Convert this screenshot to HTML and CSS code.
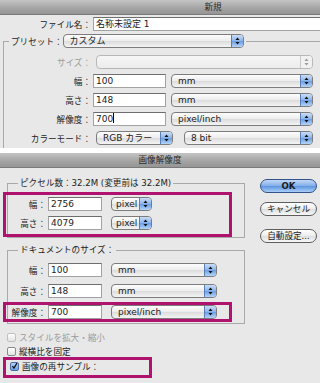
FILE: index.html
```html
<!DOCTYPE html>
<html lang="ja">
<head>
    <meta charset="utf-8" />
    <title>新規 / 画像解像度</title>
    <link rel="stylesheet" href="styles.css">
</head>
<body>
    <div class="win win-new">
        <div class="titlebar title-new">新規</div>
        <div class="file-row">
            <span class="lbl lbl-file">ファイル名：</span>
            <div class="field w-file">名称未設定 1</div>
        </div>
        <fieldset class="grp grp-new">
            <legend>
                <div class="legend-row">
                    <span class="lbl">プリセット：</span>
                    <div class="pop w-preset"><span class="txt">カスタム</span><span class="step"><svg width="9" height="12" viewBox="0 0 9 12"><path d="M2.5 5h4L4.5 2.5z M2.5 7h4L4.5 9.5z" fill="#111"/></svg></span></div>
                </div>
            </legend>
            <div class="frow">
                <span class="lbl lbl-new dim">サイズ：</span>
                <div class="pop dis w-size ml5"><span class="txt"></span><span class="step"><svg width="9" height="12" viewBox="0 0 9 12"><path d="M2.5 5h4L4.5 2.5z M2.5 7h4L4.5 9.5z" fill="#9a9a9a"/></svg></span></div>
            </div>
            <div class="frow">
                <span class="lbl lbl-new">幅：</span>
                <div class="field w-num-new">100</div>
                <div class="pop w-unit-new ml5"><span class="txt">mm</span><span class="step"><svg width="9" height="12" viewBox="0 0 9 12"><path d="M2.5 5h4L4.5 2.5z M2.5 7h4L4.5 9.5z" fill="#111"/></svg></span></div>
            </div>
            <div class="frow">
                <span class="lbl lbl-new">高さ：</span>
                <div class="field w-num-new">148</div>
                <div class="pop w-unit-new ml5"><span class="txt">mm</span><span class="step"><svg width="9" height="12" viewBox="0 0 9 12"><path d="M2.5 5h4L4.5 2.5z M2.5 7h4L4.5 9.5z" fill="#111"/></svg></span></div>
            </div>
            <div class="frow">
                <span class="lbl lbl-new">解像度：</span>
                <div class="field w-num-new">700<span class="caret"></span></div>
                <div class="pop w-unit-new ml5"><span class="txt">pixel/inch</span><span class="step"><svg width="9" height="12" viewBox="0 0 9 12"><path d="M2.5 5h4L4.5 2.5z M2.5 7h4L4.5 9.5z" fill="#111"/></svg></span></div>
            </div>
            <div class="frow">
                <span class="lbl lbl-new">カラーモード：</span>
                <div class="pop w-mode ml5"><span class="txt">RGB カラー</span><span class="step"><svg width="9" height="12" viewBox="0 0 9 12"><path d="M2.5 5h4L4.5 2.5z M2.5 7h4L4.5 9.5z" fill="#111"/></svg></span></div>
                <div class="pop w-bit"><span class="txt">8 bit</span><span class="step"><svg width="9" height="12" viewBox="0 0 9 12"><path d="M2.5 5h4L4.5 2.5z M2.5 7h4L4.5 9.5z" fill="#111"/></svg></span></div>
            </div>
        </fieldset>
    </div>

    <div class="win win-res">
        <div class="titlebar">画像解像度</div>
        <div class="res-body">
            <div class="res-left">
                <fieldset class="grp grp-res">
                    <legend>ピクセル数：32.2M (変更前は 32.2M)</legend>
                    <div class="hl hl-px">
                        <div class="frow">
                            <span class="lbl lbl-hl">幅：</span>
                            <div class="field w-num">2756</div>
                            <div class="pop w-px ml9"><span class="txt">pixel</span><span class="step"><svg width="9" height="12" viewBox="0 0 9 12"><path d="M2.5 5h4L4.5 2.5z M2.5 7h4L4.5 9.5z" fill="#111"/></svg></span></div>
                        </div>
                        <div class="frow last">
                            <span class="lbl lbl-hl">高さ：</span>
                            <div class="field w-num">4079</div>
                            <div class="pop w-px ml9"><span class="txt">pixel</span><span class="step"><svg width="9" height="12" viewBox="0 0 9 12"><path d="M2.5 5h4L4.5 2.5z M2.5 7h4L4.5 9.5z" fill="#111"/></svg></span></div>
                        </div>
                    </div>
                </fieldset>

                <fieldset class="grp grp-res grp-doc">
                    <legend>ドキュメントのサイズ：</legend>
                    <div class="frow gap7">
                        <span class="lbl lbl-doc">幅：</span>
                        <div class="field w-num">100</div>
                        <div class="pop w-mm ml9"><span class="txt">mm</span><span class="step"><svg width="9" height="12" viewBox="0 0 9 12"><path d="M2.5 5h4L4.5 2.5z M2.5 7h4L4.5 9.5z" fill="#111"/></svg></span></div>
                    </div>
                    <div class="frow last">
                        <span class="lbl lbl-doc">高さ：</span>
                        <div class="field w-num">148</div>
                        <div class="pop w-mm ml9"><span class="txt">mm</span><span class="step"><svg width="9" height="12" viewBox="0 0 9 12"><path d="M2.5 5h4L4.5 2.5z M2.5 7h4L4.5 9.5z" fill="#111"/></svg></span></div>
                    </div>
                    <div class="hl hl-res">
                        <div class="frow last">
                            <span class="lbl lbl-hl">解像度：</span>
                            <div class="field w-num">700</div>
                            <div class="pop w-mm ml9"><span class="txt">pixel/inch</span><span class="step"><svg width="9" height="12" viewBox="0 0 9 12"><path d="M2.5 5h4L4.5 2.5z M2.5 7h4L4.5 9.5z" fill="#111"/></svg></span></div>
                        </div>
                    </div>
                </fieldset>

                <div class="chk-row chk-first dim"><span class="box"></span>スタイルを拡大・縮小</div>
                <div class="chk-row"><span class="box"></span>縦横比を固定</div>
                <div class="hl hl-chk">
                    <div class="chk-row"><span class="box on"><svg width="10" height="10" viewBox="0 0 10 10"><path d="M2 5l2.2 3L8.5 1" fill="none" stroke="#111" stroke-width="1.8"/></svg></span>画像の再サンプル：</div>
                </div>
            </div>

            <div class="res-buttons">
                <div class="btn btn-ok">OK</div>
                <div class="btn btn-cancel">キャンセル</div>
                <div class="btn btn-auto">自動設定...</div>
            </div>
        </div>
    </div>
</body>
</html>
```

FILE: styles.css
```css
html,
body {
    margin: 0;
    padding: 0;
}

body {
    width: 320px;
    height: 383px;
    overflow: hidden;
    background: #fff;
    font-family: "DejaVu Sans", "Noto Sans CJK JP", sans-serif;
    font-size: 8.6px;
    color: #1c1c1c;
}

.win {
    width: 320px;
    background: #e8e8e8;
    overflow: hidden;
}

.win-new {
    height: 148px;
}

.win-res {
    height: 230px;
    margin-top: 5px;
}

.titlebar {
    height: 15px;
    line-height: 15px;
    text-align: center;
    color: #2b2b2b;
    background: linear-gradient(#c4c4c4, #a3a3a3 60%, #959595);
    border-bottom: 1px solid #7a7a7a;
    box-sizing: border-box;
}

/* the 新規 window is wider than the crop, so its title sits right of centre */
.title-new {
    padding-left: 106px;
}

.lbl {
    flex: none;
    text-align: right;
    white-space: nowrap;
}

.dim {
    color: #9c9c9c;
}

/* text fields */
.field {
    flex: none;
    height: 14px;
    line-height: 13px;
    padding-left: 2px;
    box-sizing: border-box;
    background: #fff;
    border: 1px solid #a2a2a2;
    border-top-color: #6e6e6e;
    font-size: 9px;
    white-space: nowrap;
    overflow: hidden;
}

.caret {
    display: inline-block;
    width: 1px;
    height: 10px;
    background: #000;
    vertical-align: -1px;
}

/* popup buttons */
.pop {
    flex: none;
    display: flex;
    height: 14px;
    box-sizing: border-box;
    border: 1px solid #7c7c7c;
    border-radius: 4px;
    background: linear-gradient(#fdfdfd, #ececec 50%, #dcdcdc 52%, #f4f4f4);
    overflow: hidden;
    font-size: 9px;
}

.pop .txt {
    flex: 1;
    padding-left: 6px;
    line-height: 12px;
    white-space: nowrap;
}

.pop .step {
    width: 11px;
    display: flex;
    align-items: center;
    justify-content: center;
    border-left: 1px solid #5a7fb6;
    background: linear-gradient(#c9ddf7, #8db5ea 48%, #6a9ee4 52%, #b4d4f8);
}

.pop.dis {
    border-color: #b8b8b8;
    background: linear-gradient(#f6f6f6, #ececec);
}

.pop.dis .step {
    border-left-color: #c8c8c8;
    background: #f1f1f1;
}

.ml5 {
    margin-left: 5px;
}

.ml9 {
    margin-left: 9px;
}

/* new document dialog */
.file-row {
    display: flex;
    align-items: center;
    height: 14px;
    margin-top: 2px;
}

.lbl-file {
    width: 91px;
}

.w-file {
    width: 227px;
    margin-left: 2px;
    border-right: none;
}

.grp {
    border: 1px solid #a9a9a9;
    padding: 0;
    min-width: 0;
}

.grp-new {
    width: 317px;
    box-sizing: border-box;
    margin: 3px 0 0 3px;
    padding: 7px 0 10px 0;
    border-right: none;
}

.grp-new legend {
    margin-left: 5px;
    padding: 0 2px;
}

.legend-row {
    display: flex;
    align-items: center;
}

.frow {
    display: flex;
    align-items: center;
    height: 14px;
    margin-bottom: 5px;
}

.frow.last {
    margin-bottom: 0;
}

.frow.gap7 {
    margin-bottom: 7px;
}

.lbl-new {
    width: 87px;
    margin-right: 2px;
}

.w-preset {
    width: 181px;
}

.w-size {
    width: 217px;
    margin-left: 3px;
}

.w-num-new {
    width: 73px;
}

.w-unit-new {
    width: 142px;
}

.w-mode {
    width: 77px;
    margin-left: 3px;
}

.w-bit {
    width: 129px;
    margin-left: 11px;
}

/* image size dialog */
.res-body {
    display: flex;
}

.res-left {
    width: 250px;
    flex: none;
}

.grp-res {
    width: 238px;
    box-sizing: border-box;
    margin: 9px 0 0 7px;
}

.grp-res legend {
    margin-left: 10px;
    padding: 0 2px;
    line-height: 12px;
    white-space: nowrap;
}

.grp-doc {
    margin-top: 6px;
    padding: 7px 0 1px 0;
}

.hl {
    border: 3px solid #b0136e;
    box-sizing: border-box;
}

.hl-px {
    width: 229px;
    margin: 3px 0 0 -5px;
    padding: 2px 0 4px 0;
}

.hl-res {
    width: 229px;
    margin: 4px 0 0 -5px;
}

.lbl-hl {
    width: 40px;
    margin-right: 2px;
}

.lbl-doc {
    width: 38px;
    margin-right: 2px;
}

.w-num {
    width: 54px;
}

.w-px {
    width: 41px;
}

.w-px .txt {
    padding-left: 4px;
}

.w-mm {
    width: 106px;
}

.chk-row {
    display: flex;
    align-items: center;
    height: 14px;
    padding-left: 7px;
    white-space: nowrap;
}

.chk-first {
    margin-top: 6px;
}

.box {
    width: 9px;
    height: 9px;
    margin-right: 3px;
    box-sizing: border-box;
    border: 1px solid #8a8a8a;
    border-radius: 2px;
    background: linear-gradient(#fff, #e2e2e2);
    display: flex;
    align-items: center;
    justify-content: center;
}

.dim .box {
    border-color: #c0c0c0;
}

.box.on {
    border-color: #4a6ea8;
    background: linear-gradient(#b9d2f4, #6c9fe4);
    overflow: visible;
}

.hl-chk {
    width: 149px;
    height: 21px;
    margin: -1px 0 0 3px;
}

.hl-chk .chk-row {
    padding-left: 4px;
    height: 12px;
}

.res-buttons {
    margin-left: 10px;
    padding-top: 11px;
    display: flex;
    flex-direction: column;
}

.btn {
    width: 57px;
    height: 14px;
    line-height: 12px;
    box-sizing: border-box;
    border: 1px solid #5d5d5d;
    border-radius: 7px;
    text-align: center;
    background: linear-gradient(#ffffff, #ececec 50%, #dedede 52%, #f8f8f8);
    white-space: nowrap;
}

.btn-ok {
    font-weight: bold;
    border-color: #34528a;
    background: linear-gradient(#c2d8f6, #83afe9 48%, #5e95e0 52%, #a9cdf8);
}

.btn-cancel {
    margin-top: 9px;
}

.btn-auto {
    margin-top: 13px;
}
```
